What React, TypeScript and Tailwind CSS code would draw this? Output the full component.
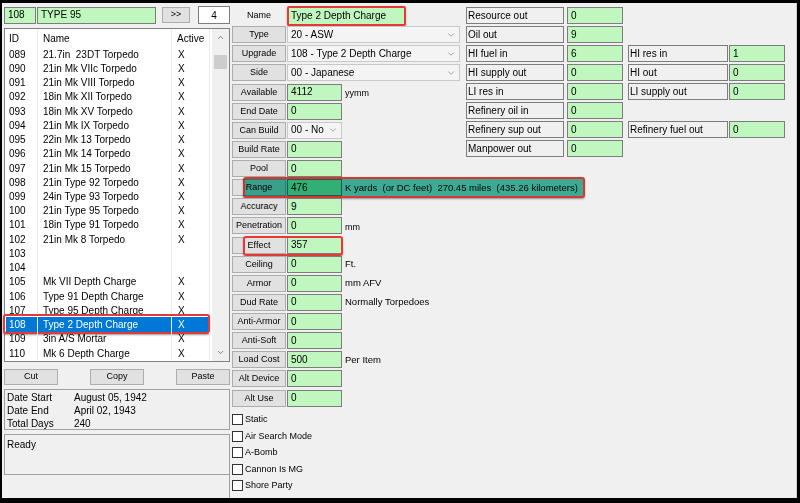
import { ChevronDown, ChevronUp } from "lucide-react";

// id, name, active
const DEVICES: [string, string, string][] = [
  ["089", "21.7in  23DT Torpedo", "X"],
  ["090", "21in Mk VIIc Torpedo", "X"],
  ["091", "21in Mk VIII Torpedo", "X"],
  ["092", "18in Mk XII Torpedo", "X"],
  ["093", "18in Mk XV Torpedo", "X"],
  ["094", "21in Mk IX Torpedo", "X"],
  ["095", "22in Mk 13 Torpedo", "X"],
  ["096", "21in Mk 14 Torpedo", "X"],
  ["097", "21in Mk 15 Torpedo", "X"],
  ["098", "21in Type 92 Torpedo", "X"],
  ["099", "24in Type 93 Torpedo", "X"],
  ["100", "21in Type 95 Torpedo", "X"],
  ["101", "18in Type 91 Torpedo", "X"],
  ["102", "21in Mk 8 Torpedo", "X"],
  ["103", "", ""],
  ["104", "", ""],
  ["105", "Mk VII Depth Charge", "X"],
  ["106", "Type 91 Depth Charge", "X"],
  ["107", "Type 95 Depth Charge", "X"],
  ["108", "Type 2 Depth Charge", "X"],
  ["109", "3in A/S Mortar", "X"],
  ["110", "Mk 6 Depth Charge", "X"],
];

type Field = {
  label: string;
  kind: "input" | "select" | "smallselect";
  value: string;
  unit?: string;
  unitPlain?: boolean;
  mark?: "range" | "effect";
};

const FIELDS: Field[] = [
  { label: "Type", kind: "select", value: "20 - ASW" },
  { label: "Upgrade", kind: "select", value: "108 - Type 2 Depth Charge" },
  { label: "Side", kind: "select", value: "00 - Japanese" },
  { label: "Available", kind: "input", value: "4112", unit: "yymm", unitPlain: true },
  { label: "End Date", kind: "input", value: "0" },
  { label: "Can Build", kind: "smallselect", value: "00 - No" },
  { label: "Build Rate", kind: "input", value: "0" },
  { label: "Pool", kind: "input", value: "0" },
  { label: "Range", kind: "input", value: "476", unit: "K yards  (or DC feet)  270.45 miles  (435.26 kilometers)", mark: "range" },
  { label: "Accuracy", kind: "input", value: "9" },
  { label: "Penetration", kind: "input", value: "0", unit: "mm", unitPlain: true },
  { label: "Effect", kind: "input", value: "357", mark: "effect" },
  { label: "Ceiling", kind: "input", value: "0", unit: "Ft." },
  { label: "Armor", kind: "input", value: "0", unit: "mm AFV" },
  { label: "Dud Rate", kind: "input", value: "0", unit: "Normally Torpedoes" },
  { label: "Anti-Armor", kind: "input", value: "0" },
  { label: "Anti-Soft", kind: "input", value: "0" },
  { label: "Load Cost", kind: "input", value: "500", unit: "Per Item" },
  { label: "Alt Device", kind: "input", value: "0" },
  { label: "Alt Use", kind: "input", value: "0" },
];

const CHECKS = ["Static", "Air Search Mode", "A-Bomb", "Cannon Is MG", "Shore Party"];

// [label, value, label2?, value2?]
const RESOURCES: [string, string, string?, string?][] = [
  ["Resource out", "0"],
  ["Oil out", "9"],
  ["HI fuel in", "6", "HI res in", "1"],
  ["HI supply out", "0", "HI out", "0"],
  ["LI res in", "0", "LI supply out", "0"],
  ["Refinery oil in", "0"],
  ["Refinery sup out", "0", "Refinery fuel out", "0"],
  ["Manpower out", "0"],
];

function GreenBox({ value, w = "w-[55px]" }: { value: string; w?: string }) {
  return (
    <div className={`${w} h-[17px] shrink-0 bg-[#bff7bf] border border-[#7d7d7d] text-[10px] leading-none pl-[3px] flex items-center`}>
      {value}
    </div>
  );
}

function FieldRow({ f }: { f: Field }) {
  return (
    <div className="relative h-[17px] flex items-center">
      <div className="w-[54px] h-[17px] shrink-0 flex items-center justify-center bg-[#e1e1e1] border border-[#adadad] text-[9px] leading-none">
        {f.label}
      </div>
      <div className="ml-[1px] flex items-center">
        {f.kind === "input" && <GreenBox value={f.value} />}
        {f.kind === "select" && (
          <div className="w-[173px] h-[17px] bg-[#f4f4f4] border border-[#c8c8c8] text-[10px] leading-none pl-[3px] pr-[3px] flex items-center justify-between">
            <span>{f.value}</span>
            <ChevronDown size={10} strokeWidth={1.5} className="text-[#707070]" />
          </div>
        )}
        {f.kind === "smallselect" && (
          <div className="w-[55px] h-[17px] bg-[#f4f4f4] border border-[#c8c8c8] text-[10px] leading-none pl-[3px] pr-[3px] flex items-center justify-between">
            <span>{f.value}</span>
            <ChevronDown size={10} strokeWidth={1.5} className="text-[#707070]" />
          </div>
        )}
        {f.unit && (
          <span className={`ml-[3px] whitespace-pre ${f.unitPlain ? "text-[9px] mt-[3px]" : "text-[9.5px]"}`}>{f.unit}</span>
        )}
      </div>
      {f.mark === "range" && (
        <div className="absolute left-[11px] top-[-2px] w-[342px] h-[21px] bg-[#41b59c] mix-blend-multiply border-2 border-[#e53935] rounded-[3px] shadow-[0_1px_2px_rgba(0,0,0,0.4)]" />
      )}
      {f.mark === "effect" && (
        <div className="absolute left-[11px] top-[-1px] w-[100px] h-[20px] border-2 border-[#e53935] rounded-[3px] shadow-[0_1px_2px_rgba(0,0,0,0.3)]" />
      )}
    </div>
  );
}

export default function App() {
  return (
    <div className="w-[800px] h-[503px] bg-black pt-[3px] pl-[2px] pr-[3px] pb-[5px] font-['Liberation_Sans',Arial,sans-serif] text-black">
      <div className="w-full h-full bg-[#f0f0f0] flex border-r border-[#cfcfcf]">
        {/* left: device list */}
        <div className="w-[228px] pl-[2px] pt-[3px] flex flex-col shrink-0">
          <div className="h-[18px] flex items-center">
            <GreenBox value="108" w="w-[32px]" />
            <div className="ml-[1px]">
              <GreenBox value="TYPE 95" w="w-[119px]" />
            </div>
            <div className="ml-[6px] w-[28px] h-[16px] bg-[#e1e1e1] border border-[#adadad] text-[9px] flex items-center justify-center">
              &gt;&gt;
            </div>
            <div className="ml-[8px] w-[32px] h-[18px] bg-white border border-[#7d7d7d] text-[10px] flex items-center justify-center">
              4
            </div>
          </div>

          <div className="mt-[4px] h-[334px] border border-[#828282] bg-white flex">
            <div className="w-[207px] text-[10px]">
              <div className="h-[18px] flex items-center">
                <div className="w-[33px] pl-[4px] h-full flex items-center border-r border-[#ececec]">ID</div>
                <div className="w-[134px] pl-[5px] h-full flex items-center border-r border-[#ececec]">Name</div>
                <div className="w-[38px] pl-[5px] h-full flex items-center border-r border-[#ececec]">Active</div>
              </div>
              {DEVICES.map(([id, name, act]) => {
                const sel = id === "108";
                return (
                  <div key={id} className={`relative h-[14.24px] flex items-center ${sel ? "text-white" : ""}`}>
                    {sel && <div className="absolute left-[1px] right-[4px] top-0 bottom-0 bg-[#0078d7]" />}
                    <div className="relative w-[33px] pl-[4px] h-full flex items-center border-r border-[#ececec]">{id}</div>
                    <div className="relative w-[134px] pl-[5px] h-full flex items-center border-r border-[#ececec] whitespace-pre">{name}</div>
                    <div className="relative w-[38px] pl-[6px] h-full flex items-center border-r border-[#ececec]">{act}</div>
                    {sel && (
                      <div className="absolute left-[-2px] right-[2px] top-[-3px] bottom-[-2px] border-2 border-[#e53935] rounded-[3px] shadow-[0_1px_2px_rgba(0,0,0,0.4)]" />
                    )}
                  </div>
                );
              })}
            </div>
            <div className="ml-auto w-[17px] bg-[#f0f0f0] flex flex-col items-center">
              <div className="h-[17px] flex items-center justify-center">
                <ChevronUp size={9} strokeWidth={2} className="text-[#606060]" />
              </div>
              <div className="mt-[9px] w-[13px] h-[14px] bg-[#cdcdcd]" />
              <div className="mt-auto h-[17px] flex items-center justify-center">
                <ChevronDown size={9} strokeWidth={2} className="text-[#606060]" />
              </div>
            </div>
          </div>

          <div className="mt-[7px] h-[16px] flex justify-between text-[9px]">
            {["Cut", "Copy", "Paste"].map((b) => (
              <div key={b} className="w-[54px] h-[16px] bg-[#e1e1e1] border border-[#adadad] flex items-center justify-center">
                {b}
              </div>
            ))}
          </div>

          <div className="mt-[4px] h-[41px] border border-[#a0a0a0] pl-[2px] pt-[1px] text-[10px]">
            {[
              ["Date Start", "August 05, 1942"],
              ["Date End", "April 02, 1943"],
              ["Total Days", "240"],
            ].map(([k, v]) => (
              <div key={k} className="h-[13px] flex items-center">
                <span className="w-[67px]">{k}</span>
                <span>{v}</span>
              </div>
            ))}
          </div>

          <div className="mt-[4px] h-[41px] border border-[#a0a0a0] pl-[2px] pt-[2px] text-[10px]">Ready</div>
          <div className="flex-1 border-r border-[#a0a0a0]" />
        </div>

        {/* middle: device fields */}
        <div className="ml-[2px] w-[228px] pt-[4px] flex flex-col shrink-0">
          <div className="flex flex-col gap-[2.125px]">
            <div className="h-[17px] flex items-center">
              <div className="w-[54px] text-[9px] text-center">Name</div>
              <div className="ml-[1px] w-[119px] h-[20px] bg-[#bff7bf] border-2 border-[#e53935] rounded-[2px] shadow-[0_1px_2px_rgba(0,0,0,0.3)] text-[10px] pl-[2px] flex items-center">
                Type 2 Depth Charge
              </div>
            </div>
            {FIELDS.map((f) => (
              <FieldRow key={f.label} f={f} />
            ))}
          </div>
          <div className="mt-[5px] flex flex-col">
            {CHECKS.map((c) => (
              <div key={c} className="h-[16.5px] flex items-center">
                <div className="w-[11px] h-[11px] border border-[#333] bg-white" />
                <span className="ml-[2px] text-[9px]">{c}</span>
              </div>
            ))}
          </div>
        </div>

        {/* right: resources */}
        <div className="ml-[6px] pt-[4px] flex flex-col gap-[2px] text-[10px]">
          {RESOURCES.map(([l1, v1, l2, v2]) => (
            <div key={l1} className="h-[17px] flex items-center">
              <div className="w-[98px] h-[17px] border border-[#7d7d7d] pl-[1px] flex items-center">{l1}</div>
              <div className="ml-[3px]">
                <GreenBox value={v1} w="w-[56px]" />
              </div>
              {l2 && (
                <>
                  <div className="ml-[5px] w-[100px] h-[17px] border border-[#7d7d7d] pl-[1px] flex items-center">{l2}</div>
                  <div className="ml-[1px]">
                    <GreenBox value={v2 ?? ""} w="w-[56px]" />
                  </div>
                </>
              )}
            </div>
          ))}
        </div>
      </div>
    </div>
  );
}
